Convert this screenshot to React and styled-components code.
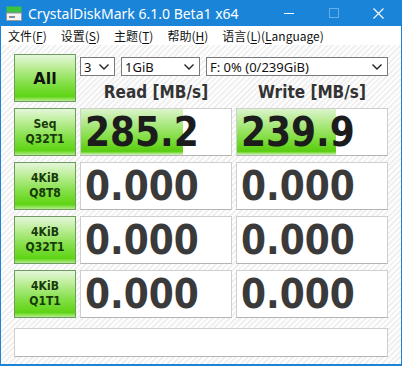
import React from "react";
import styled, { createGlobalStyle } from "styled-components";

const GlobalStyle = createGlobalStyle`
  html, body {
    margin: 0;
    padding: 0;
    background: #ffffff;
  }
  body {
    font-family: "Noto Sans", "Liberation Sans", sans-serif;
  }
`;

const tests = [
  { top: "Seq", bottom: "Q32T1", read: "285.2", write: "239.9", readFill: 68, writeFill: 66 },
  { top: "4KiB", bottom: "Q8T8", read: "0.000", write: "0.000" },
  { top: "4KiB", bottom: "Q32T1", read: "0.000", write: "0.000" },
  { top: "4KiB", bottom: "Q1T1", read: "0.000", write: "0.000" }
];

const menus = [
  { label: "文件", key: "F" },
  { label: "设置", key: "S" },
  { label: "主题", key: "T" },
  { label: "帮助", key: "H" },
  { label: "语言", key: "L", extra: true }
];

const Chevron = () => (
  <svg width="12" height="8" viewBox="0 0 12 8">
    <polyline points="1.5,1.5 6,6 10.5,1.5" fill="none" stroke="#222" strokeWidth="1.4" />
  </svg>
);

const AppIcon = () => (
  <svg width="16" height="15" viewBox="0 0 16 15">
    <rect x="0.5" y="0.5" width="15" height="6" fill="#3cc23c" />
    <rect x="0.5" y="7" width="15" height="7.5" fill="#f4f4f4" stroke="#9a9a9a" strokeWidth="1" />
    <rect x="3" y="10" width="6" height="2" fill="#8a8a8a" />
  </svg>
);

const App = () => (
  <>
    <GlobalStyle />
    <Window>
      <TitleBar>
        <AppIcon />
        <Title>CrystalDiskMark 6.1.0 Beta1 x64</Title>
        <Controls>
          <Control>
            <svg width="10" height="10" viewBox="0 0 10 10">
              <line x1="0" y1="5.5" x2="10" y2="5.5" stroke="#fff" strokeWidth="1" />
            </svg>
          </Control>
          <Control faded>
            <svg width="10" height="10" viewBox="0 0 10 10">
              <rect x="0.5" y="0.5" width="9" height="9" fill="none" stroke="#fff" strokeWidth="1" />
            </svg>
          </Control>
          <Control>
            <svg width="11" height="11" viewBox="0 0 11 11">
              <path d="M0.5 0.5 L10.5 10.5 M10.5 0.5 L0.5 10.5" stroke="#fff" strokeWidth="1.1" />
            </svg>
          </Control>
        </Controls>
      </TitleBar>
      <MenuBar>
        {menus.map(m => (
          <MenuItem key={m.key}>
            {m.label}(<u>{m.key}</u>){m.extra && <>(<u>L</u>anguage)</>}
          </MenuItem>
        ))}
      </MenuBar>
      <Body>
        <Grid>
          <AllButton>All</AllButton>
          <Selects>
            <Select width={35}>
              <span>3</span>
              <Chevron />
            </Select>
            <Select width={79}>
              <span>1GiB</span>
              <Chevron />
            </Select>
            <Select width={182}>
              <span>F: 0% (0/239GiB)</span>
              <Chevron />
            </Select>
          </Selects>
          <Header>Read [MB/s]</Header>
          <Header>Write [MB/s]</Header>
          {tests.map((t, i) => (
            <React.Fragment key={i}>
              <TestButton>
                {t.top}
                <br />
                {t.bottom}
              </TestButton>
              <Cell>
                {t.readFill && <Fill style={{ width: t.readFill + "%" }} />}
                <Value active={!!t.readFill}>{t.read}</Value>
              </Cell>
              <Cell>
                {t.writeFill && <Fill style={{ width: t.writeFill + "%" }} />}
                <Value active={!!t.writeFill}>{t.write}</Value>
              </Cell>
            </React.Fragment>
          ))}
        </Grid>
        <StatusBar />
      </Body>
    </Window>
  </>
);

const Window = styled.div`
  width: 402px;
  height: 366px;
  box-sizing: border-box;
  border: 1px solid #1a84d8;
  border-top: none;
  border-bottom-width: 2px;
  display: flex;
  flex-direction: column;
  background: #ffffff;
  overflow: hidden;
`;

const TitleBar = styled.div`
  height: 26px;
  flex-shrink: 0;
  background: #1a84d8;
  display: flex;
  align-items: center;
  padding-left: 5px;
  gap: 6px;
`;

const Title = styled.div`
  color: #ffffff;
  font-family: "Noto Sans", sans-serif;
  font-size: 14px;
  flex: 1;
  padding-top: 1px;
`;

const Controls = styled.div`
  display: flex;
  height: 100%;
`;

const Control = styled.div`
  width: 45px;
  height: 100%;
  display: flex;
  align-items: center;
  justify-content: center;
  opacity: ${p => (p.faded ? 0.35 : 1)};
`;

const MenuBar = styled.div`
  height: 19px;
  flex-shrink: 0;
  display: flex;
  align-items: center;
  gap: 14px;
  padding-left: 7px;
  background: #ffffff;
  font-family: "Noto Sans CJK SC", "Noto Sans", sans-serif;
  font-size: 12px;
  color: #111;
`;

const MenuItem = styled.span`
  white-space: nowrap;
  u {
    text-decoration-thickness: 1px;
    text-underline-offset: 2px;
  }
`;

const Body = styled.div`
  flex: 1;
  padding: 9px 0 0 13px;
  background-color: #f7f7f7;
  background-image: repeating-linear-gradient(
    135deg,
    rgba(255, 255, 255, 0.9) 0px,
    rgba(255, 255, 255, 0.9) 2px,
    rgba(236, 236, 236, 0.6) 2px,
    rgba(236, 236, 236, 0.6) 4px
  );
  display: flex;
  flex-direction: column;
  gap: 10px;
`;

const Grid = styled.div`
  display: grid;
  grid-template-columns: 62px 152px 152px;
  grid-template-rows: 22px 20px repeat(4, 48px);
  column-gap: 4px;
  row-gap: 6px;
`;

const greenGradient = `
  linear-gradient(
    to bottom,
    #e4f7da 0%,
    #bfee9c 25%,
    #86e04a 60%,
    #5ed414 90%,
    #b4ec8c 100%
  )
`;

const AllButton = styled.div`
  grid-row: 1 / span 2;
  box-sizing: border-box;
  border: 1px solid #6f9a60;
  background: ${greenGradient};
  display: flex;
  align-items: center;
  justify-content: center;
  font-family: "DejaVu Sans", sans-serif;
  font-weight: bold;
  font-size: 16px;
  color: #111;
`;

const Selects = styled.div`
  grid-column: 2 / span 2;
  display: flex;
  gap: 6px;
  padding-top: 3px;
`;

const Select = styled.div`
  width: ${p => p.width}px;
  height: 19px;
  box-sizing: border-box;
  border: 1px solid #7a7a7a;
  background: #ffffff;
  display: flex;
  align-items: center;
  justify-content: space-between;
  padding: 0 4px 0 3px;
  font-family: "Noto Sans", sans-serif;
  font-size: 13px;
  color: #111;
`;

const Header = styled.div`
  display: flex;
  align-items: flex-end;
  justify-content: center;
  font-family: "DejaVu Sans Condensed", "DejaVu Sans", sans-serif;
  font-stretch: condensed;
  font-weight: bold;
  font-size: 17px;
  line-height: 20px;
  color: #333;
`;

const TestButton = styled.div`
  box-sizing: border-box;
  border: 1px solid #6f9a60;
  background: ${greenGradient};
  display: flex;
  align-items: center;
  justify-content: center;
  text-align: center;
  font-family: "DejaVu Sans Condensed", "DejaVu Sans", sans-serif;
  font-stretch: condensed;
  font-weight: bold;
  font-size: 12px;
  line-height: 15px;
  color: #163a08;
`;

const Cell = styled.div`
  position: relative;
  box-sizing: border-box;
  border: 1px solid #cfcfcf;
  border-bottom-color: #b4b4b4;
  background: #ffffff;
  overflow: hidden;
  display: flex;
  align-items: center;
  padding-left: 4px;
`;

const Fill = styled.div`
  position: absolute;
  left: 0;
  top: 0;
  bottom: 0;
  background: linear-gradient(
    to bottom,
    #dcf4cc 0%,
    #b0ea88 30%,
    #78da34 70%,
    #58cd0e 92%,
    #d8f4c6 100%
  );
`;

const Value = styled.div`
  position: relative;
  font-family: "DejaVu Sans Condensed", "DejaVu Sans", sans-serif;
  font-stretch: condensed;
  font-weight: bold;
  font-size: 40px;
  line-height: 46px;
  color: ${p => (p.active ? "#1c1c1c" : "#3a3a3a")};
`;

const StatusBar = styled.div`
  width: 374px;
  height: 29px;
  box-sizing: border-box;
  border: 1px solid #cfcfcf;
  border-bottom-color: #b4b4b4;
  background: #ffffff;
`;

export default App;
